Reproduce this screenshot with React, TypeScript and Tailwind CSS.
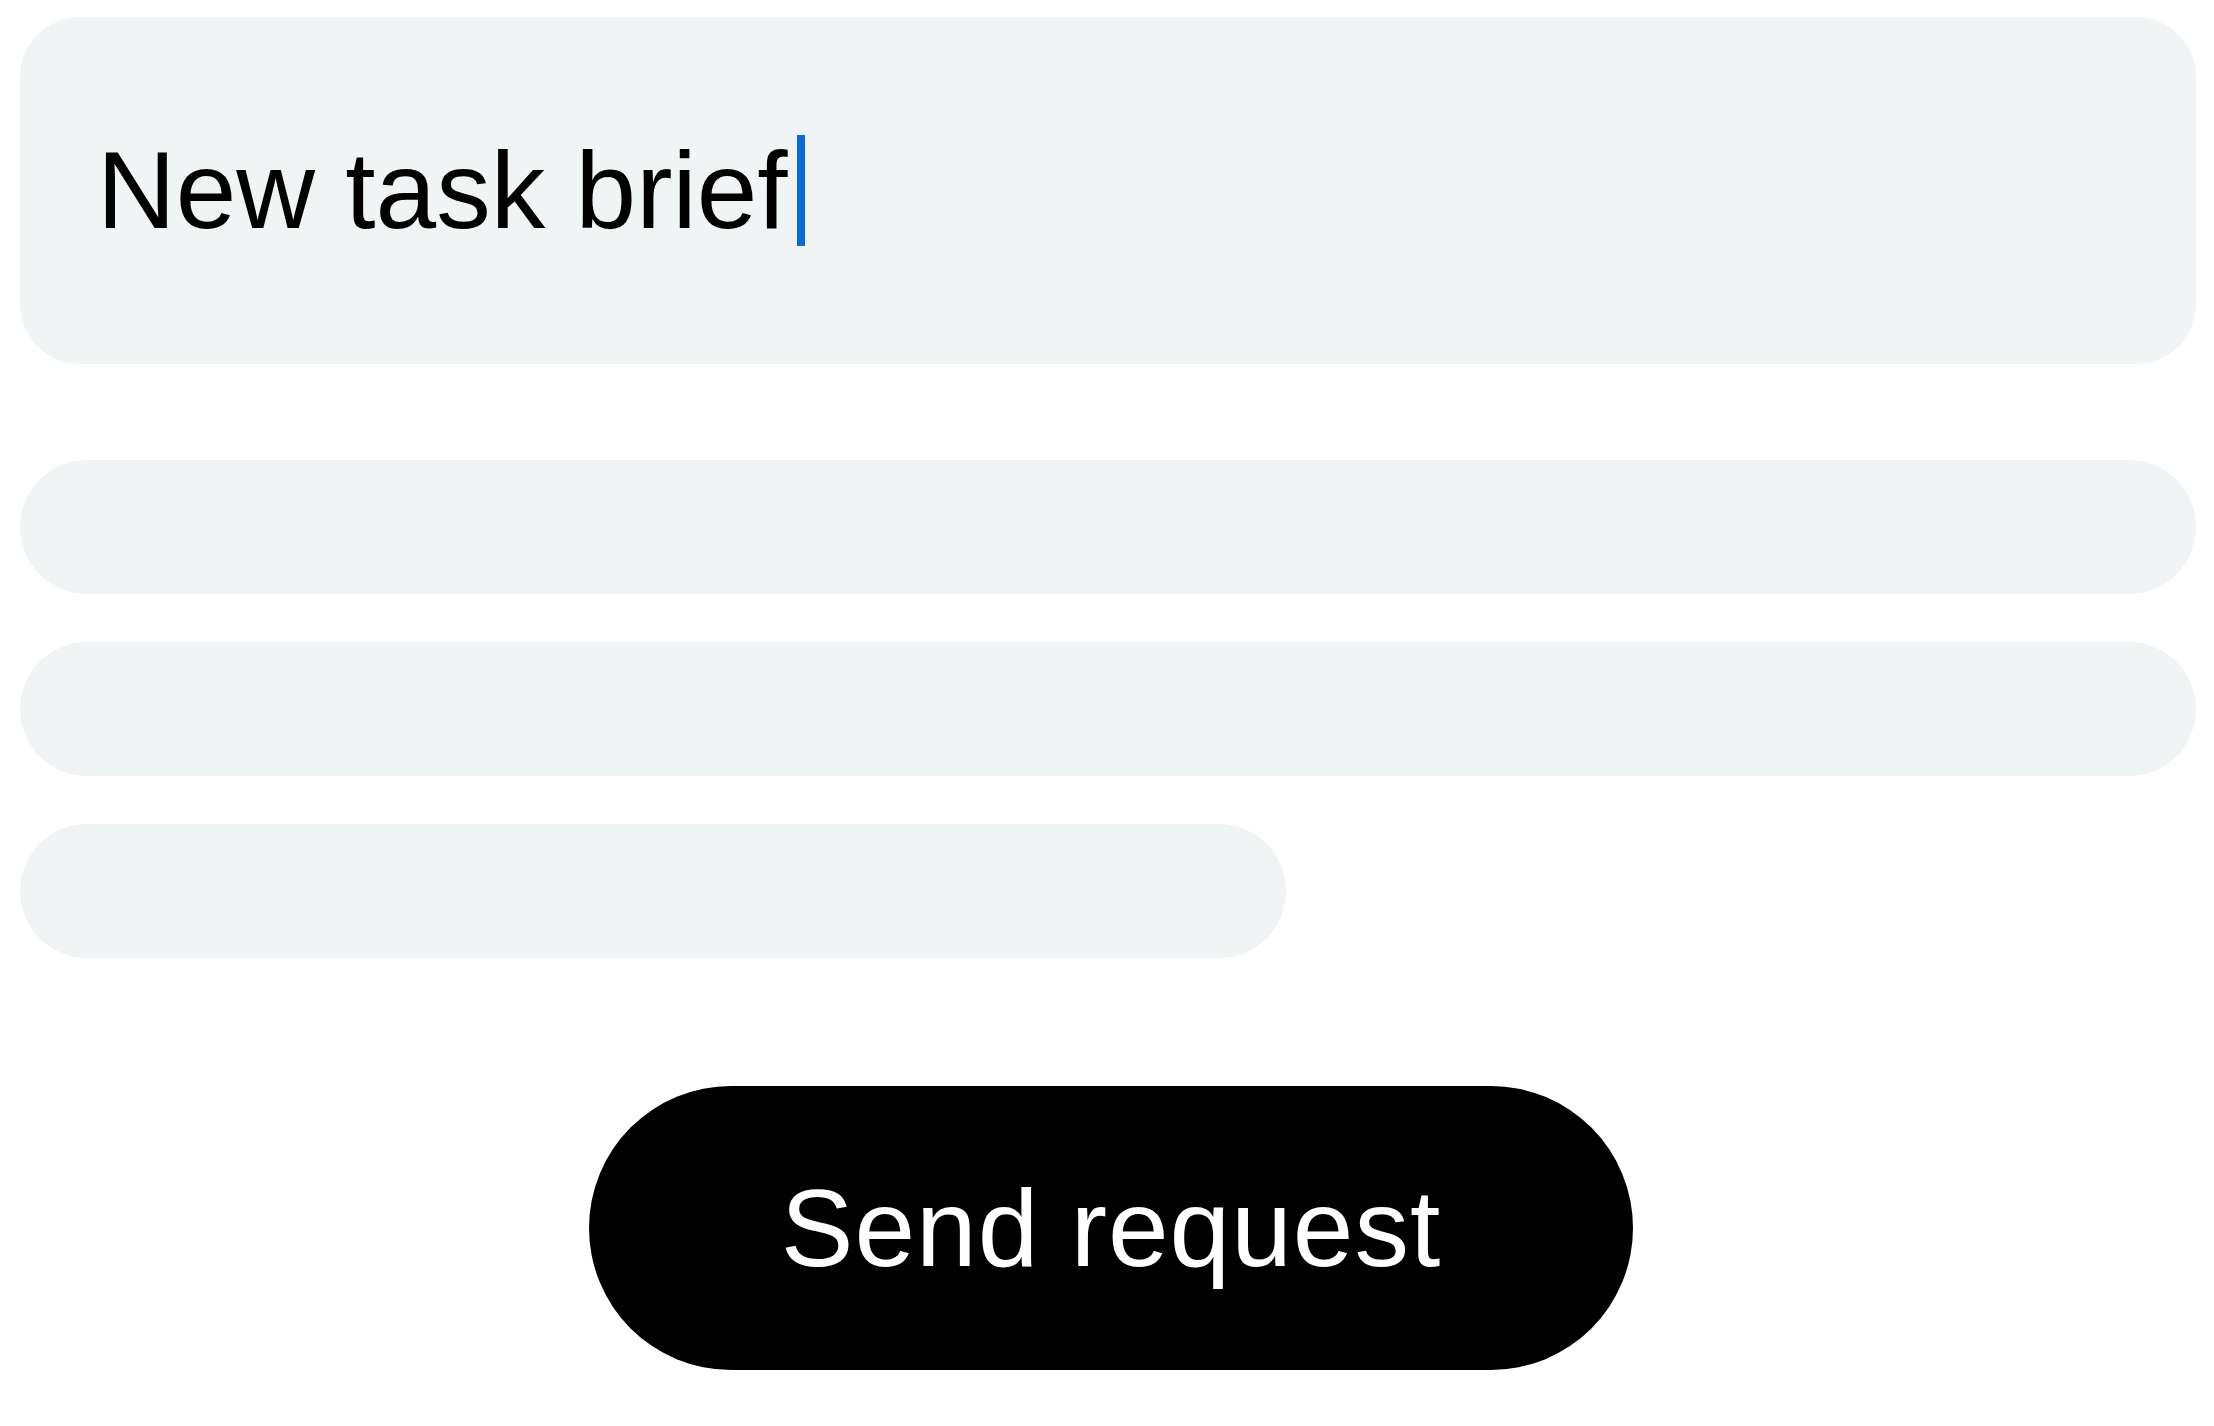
export default function App() {
  return (
    <div className="min-h-screen bg-white font-['Liberation_Sans',Arial,sans-serif]">
      <div className="flex flex-col pl-5 pr-[18px] pt-[17px]">
        {/* Title field */}
        <div className="flex h-[347px] items-center rounded-[60px] bg-[#f0f4f5] pl-[77px]">
          <span className="text-[109px] leading-none text-black">New task brief</span>
          <span className="ml-[9px] h-[111px] w-2 bg-[#0a6ad8]" />
        </div>

        {/* Placeholder lines */}
        <div className="mt-24 flex flex-col gap-12">
          <div className="h-[134px] rounded-full bg-[#f0f4f5]" />
          <div className="h-[134px] rounded-full bg-[#f0f4f5]" />
          <div className="h-[134px] w-[1266px] rounded-full bg-[#f0f4f5]" />
        </div>

        {/* Action */}
        <button className="mt-32 ml-[569px] flex h-[284px] w-[1044px] items-center justify-center rounded-full bg-black text-[109px] leading-none tracking-[1px] text-white">
          Send request
        </button>
      </div>
    </div>
  );
}
